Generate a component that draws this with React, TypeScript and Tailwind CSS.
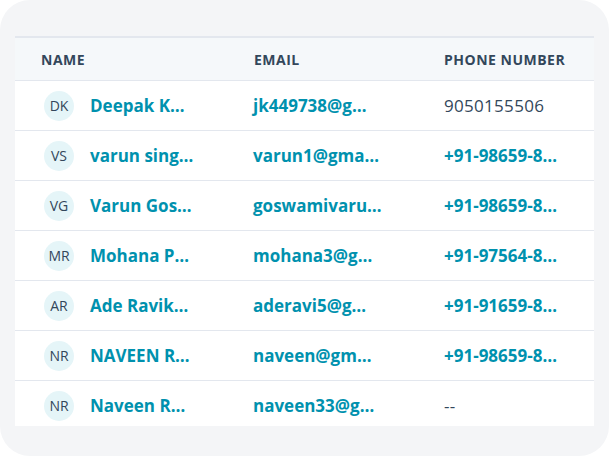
import React from "react";

const rows = [
  { i: "DK", name: "Deepak K…", email: "jk449738@g…", phone: "9050155506", link: false },
  { i: "VS", name: "varun sing…", email: "varun1@gma…", phone: "+91-98659-8…", link: true },
  { i: "VG", name: "Varun Gos…", email: "goswamivaru…", phone: "+91-98659-8…", link: true },
  { i: "MR", name: "Mohana P…", email: "mohana3@g…", phone: "+91-97564-8…", link: true },
  { i: "AR", name: "Ade Ravik…", email: "aderavi5@g…", phone: "+91-91659-8…", link: true },
  { i: "NR", name: "NAVEEN R…", email: "naveen@gm…", phone: "+91-98659-8…", link: true },
  { i: "NR", name: "Naveen R…", email: "naveen33@g…", phone: "--", link: false },
];

export default function App() {
  return (
    <div className="w-[609px] h-[456px] bg-white" style={{ fontFamily: "'Open Sans', 'Noto Sans', sans-serif" }}>
      <div className="w-full h-full bg-[#f4f5f7] rounded-[30px] px-[15px] pt-[36px]">
        <div className="w-[579px] h-[390px] overflow-hidden bg-white">
          <div className="flex h-[45px] bg-[#f5f8fa] border-t-2 border-b border-[#e3e7ee] text-[14px] font-bold text-[#33475b] tracking-[0.5px]">
            <div className="w-[211px] pl-[26px] flex items-center">NAME</div>
            <div className="w-[192px] pl-[28px] flex items-center">EMAIL</div>
            <div className="flex-1 pl-[26px] flex items-center">PHONE NUMBER</div>
          </div>
          {rows.map((r, k) => (
            <div key={k} className="flex h-[50px] border-b border-[#e3e7ee]">
              <div className="w-[211px] pl-[29px] flex items-center gap-[16px]">
                <div className="w-[30px] h-[30px] rounded-full bg-[#e5f5f8] flex items-center justify-center text-[14px] text-[#33475b]">
                  {r.i}
                </div>
                <span className="text-[17px] font-bold text-[#0091ae]">{r.name}</span>
              </div>
              <div className="w-[192px] pl-[27px] flex items-center text-[17px] font-bold text-[#0091ae]">
                {r.email}
              </div>
              <div className={`flex-1 pl-[26px] flex items-center text-[17px] ${r.link ? "font-bold text-[#0091ae]" : "text-[#33475b] tracking-[0.3px]"}`}>
                {r.phone}
              </div>
            </div>
          ))}
        </div>
      </div>
    </div>
  );
}
